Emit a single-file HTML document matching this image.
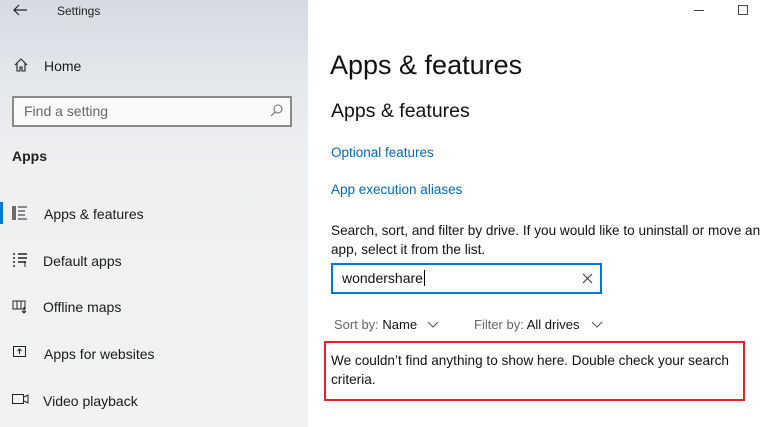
<!DOCTYPE html>
<html><head><style>
*{margin:0;padding:0;box-sizing:border-box}
body{width:768px;height:427px;overflow:hidden;font-family:"Liberation Sans",sans-serif;background:#fff;position:relative;color:#000}
.side{position:absolute;left:0;top:0;width:308px;height:427px;background:linear-gradient(180deg,#d5dbe2 0%,#e4e7eb 18%,#eff0f2 40%,#f2f2f3 100%)}
.a{position:absolute;white-space:nowrap}
.nav{font-size:14px;color:#1a1a1a}
.link{color:#0067c0;font-size:14px}
</style></head><body>
<div class="side">
  <svg class="a" style="left:12px;top:4px" width="16" height="12"><path d="M15 6H2M7 1L2 6l5 5" stroke="#222" stroke-width="1.2" fill="none"/></svg>
  <div class="a" style="left:57px;top:4px;font-size:12px;color:#222">Settings</div>
  <svg class="a" style="left:14px;top:58px" width="14" height="14"><path d="M1 7L7 1l6 6M3 5v8h3V9h2v4h3V5" stroke="#222" stroke-width="1.1" fill="none"/></svg>
  <div class="a nav" style="left:44px;top:58px">Home</div>
  <div class="a" style="left:12px;top:96px;width:280px;height:31px;border:2px solid #8a8a8a;background:#fafafa"></div>
  <div class="a" style="left:24px;top:103px;font-size:14px;color:#666">Find a setting</div>
  <svg class="a" style="left:270px;top:104px" width="13" height="13"><circle cx="8" cy="5" r="4" stroke="#666" fill="none"/><path d="M5 8L1 12" stroke="#666"/></svg>
  <div class="a" style="left:12px;top:148px;font-size:14px;font-weight:bold;color:#222">Apps</div>
  <div class="a" style="left:0;top:202px;width:3px;height:22px;background:#0078d7"></div>
  <svg class="a" style="left:12px;top:205px" width="16" height="16"><path d="M1 1v14M3 1v14" stroke="#222" stroke-width="1.3"/><path d="M6 2h9M6 6h7M6 10h7M6 14h9" stroke="#222"/></svg>
  <div class="a nav" style="left:44px;top:206px">Apps &amp; features</div>
  <svg class="a" style="left:12px;top:253px" width="16" height="14"><path d="M1 1h2M1 5h2M1 9h2M1 13h2M6 1h9M6 5h9M6 9h8" stroke="#222" stroke-width="1.4"/><path d="M13 8v6" stroke="#222"/></svg>
  <div class="a nav" style="left:43px;top:253px">Default apps</div>
  <svg class="a" style="left:12px;top:299px" width="16" height="16"><path d="M1 2h12v8H1zM5 2v8M9 2v8M12 8v6M10 12l2 2 2-2" stroke="#222" fill="none"/></svg>
  <div class="a nav" style="left:43px;top:299px">Offline maps</div>
  <svg class="a" style="left:13px;top:346px" width="14" height="12"><rect x="0.5" y="0.5" width="12" height="10" stroke="#222" fill="none"/><path d="M6.5 8V3M4.5 5l2-2 2 2" stroke="#222" fill="none"/></svg>
  <div class="a nav" style="left:44px;top:346px">Apps for websites</div>
  <svg class="a" style="left:12px;top:394px" width="17" height="10"><rect x="0.5" y="0.5" width="11" height="9" stroke="#222" fill="none"/><path d="M12 3l4-2v8l-4-2" stroke="#222" fill="none"/></svg>
  <div class="a nav" style="left:43px;top:393px">Video playback</div>
</div>
<div class="a" style="left:694px;top:10px;width:10px;height:1px;background:#444"></div>
<div class="a" style="left:738px;top:5px;width:10px;height:10px;border:1px solid #444"></div>
<div class="a" style="left:330px;top:50px;font-size:27px;color:#111">Apps &amp; features</div>
<div class="a" style="left:331px;top:100px;font-size:19.5px;color:#111">Apps &amp; features</div>
<div class="a link" style="left:331px;top:145px;font-size:13.5px">Optional features</div>
<div class="a link" style="left:331px;top:182px;font-size:13.5px">App execution aliases</div>
<div class="a" style="left:331px;top:221px;font-size:13.6px;line-height:19px;color:#111">Search, sort, and filter by drive. If you would like to uninstall or move an<br>app, select it from the list.</div>
<div class="a" style="left:331px;top:263px;width:271px;height:31px;border:2px solid #0078d7"></div>
<div class="a" style="left:342px;top:270px;font-size:14px;color:#111">wondershare<span style="border-left:1px solid #000;margin-left:1px"></span></div>
<svg class="a" style="left:582px;top:273px" width="11" height="11"><path d="M1 1l9 9M10 1l-9 9" stroke="#444" stroke-width="1.2"/></svg>
<div class="a" style="left:334px;top:317px;font-size:13px;color:#666">Sort by: <span style="color:#111">Name</span></div>
<svg class="a" style="left:427px;top:321px" width="12" height="7"><path d="M1 1l5 5 5-5" stroke="#555" fill="none"/></svg>
<div class="a" style="left:474px;top:317px;font-size:13px;color:#666">Filter by: <span style="color:#111">All drives</span></div>
<svg class="a" style="left:591px;top:321px" width="12" height="7"><path d="M1 1l5 5 5-5" stroke="#555" fill="none"/></svg>
<div class="a" style="left:324px;top:341px;width:421px;height:60px;border:2px solid #e8202a"></div>
<div class="a" style="left:331px;top:351px;font-size:13.6px;line-height:19px;color:#111">We couldn’t find anything to show here. Double check your search<br>criteria.</div>
</body></html>
